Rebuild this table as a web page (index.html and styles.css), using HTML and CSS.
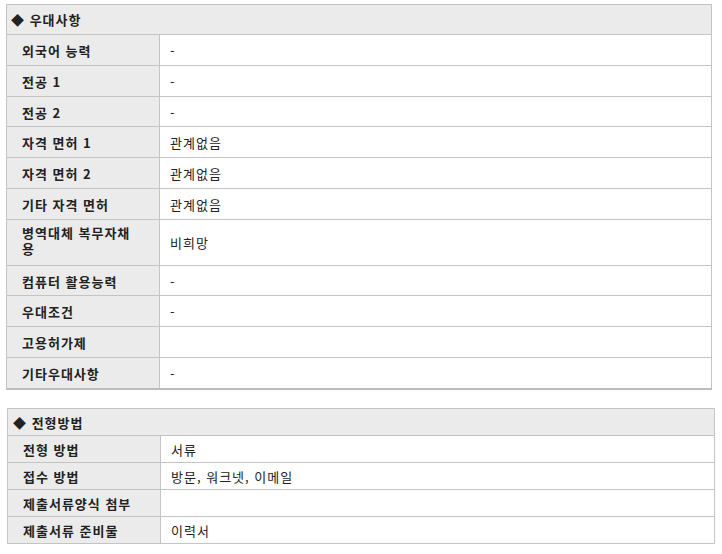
FILE: index.html
```html
<!DOCTYPE html>
<html lang="ko">
<head>
<meta charset="utf-8">
<link rel="stylesheet" href="styles.css">
</head>
<body>
<section class="tbl tbl-a">
  <div class="head">◆ 우대사항</div>
  <div class="row"><div class="lab">외국어 능력</div><div class="val">-</div></div>
  <div class="row"><div class="lab">전공 1</div><div class="val">-</div></div>
  <div class="row"><div class="lab">전공 2</div><div class="val">-</div></div>
  <div class="row"><div class="lab">자격 면허 1</div><div class="val">관계없음</div></div>
  <div class="row"><div class="lab">자격 면허 2</div><div class="val">관계없음</div></div>
  <div class="row"><div class="lab">기타 자격 면허</div><div class="val">관계없음</div></div>
  <div class="row"><div class="lab lab-wrap">병역대체 복무자채용</div><div class="val">비희망</div></div>
  <div class="row"><div class="lab">컴퓨터 활용능력</div><div class="val">-</div></div>
  <div class="row"><div class="lab">우대조건</div><div class="val">-</div></div>
  <div class="row"><div class="lab">고용허가제</div><div class="val"></div></div>
  <div class="row last"><div class="lab">기타우대사항</div><div class="val">-</div></div>
</section>
<section class="tbl tbl-b">
  <div class="head">◆ 전형방법</div>
  <div class="row"><div class="lab">전형 방법</div><div class="val">서류</div></div>
  <div class="row"><div class="lab">접수 방법</div><div class="val">방문, 워크넷, 이메일</div></div>
  <div class="row"><div class="lab">제출서류양식 첨부</div><div class="val"></div></div>
  <div class="row"><div class="lab">제출서류 준비물</div><div class="val">이력서</div></div>
</section>
</body>
</html>
```
FILE: styles.css
```css
html, body { margin: 0; padding: 0; background: #fff; }
body {
  font-family: "Noto Sans CJK KR", "Noto Sans", sans-serif;
  font-size: 13px;
  color: #222;
  letter-spacing: 1px;
  padding-top: 4px;
}
.tbl {
  border: 1px solid #c4c4c4;
  box-sizing: border-box;
}
.tbl-a { margin-left: 6px; width: 706px; border-bottom: 2px solid #bdbdbd; }
.tbl-b { margin-left: 7px; width: 708px; margin-top: 18px; }
.head {
  background: #ebebeb;
  font-weight: bold;
  line-height: 16px;
  padding: 7px 0 6px 4px;
  border-bottom: 1px solid #c4c4c4;
}
.tbl-b .head { padding: 6px 0 4px 5px; }
.row {
  display: grid;
  grid-template-columns: 153px 1fr;
  border-bottom: 1px solid #c4c4c4;
}
.row.last { border-bottom: 0; }
.lab {
  background: #ebebeb;
  font-weight: bold;
  border-right: 1px solid #c4c4c4;
  padding: 8px 22px 6.8px 15px;
  line-height: 15px;
}
.lab.lab-wrap {
  line-height: 16px;
  padding-top: 5px;
  padding-bottom: 7.8px;
}
.val {
  padding: 8px 10px 6.8px;
  line-height: 15px;
  display: flex;
  align-items: center;
}
.tbl-b .lab, .tbl-b .val { padding-top: 6px; padding-bottom: 4px; line-height: 16px; }
.tbl-b .row:last-child { border-bottom: 0; }
```
